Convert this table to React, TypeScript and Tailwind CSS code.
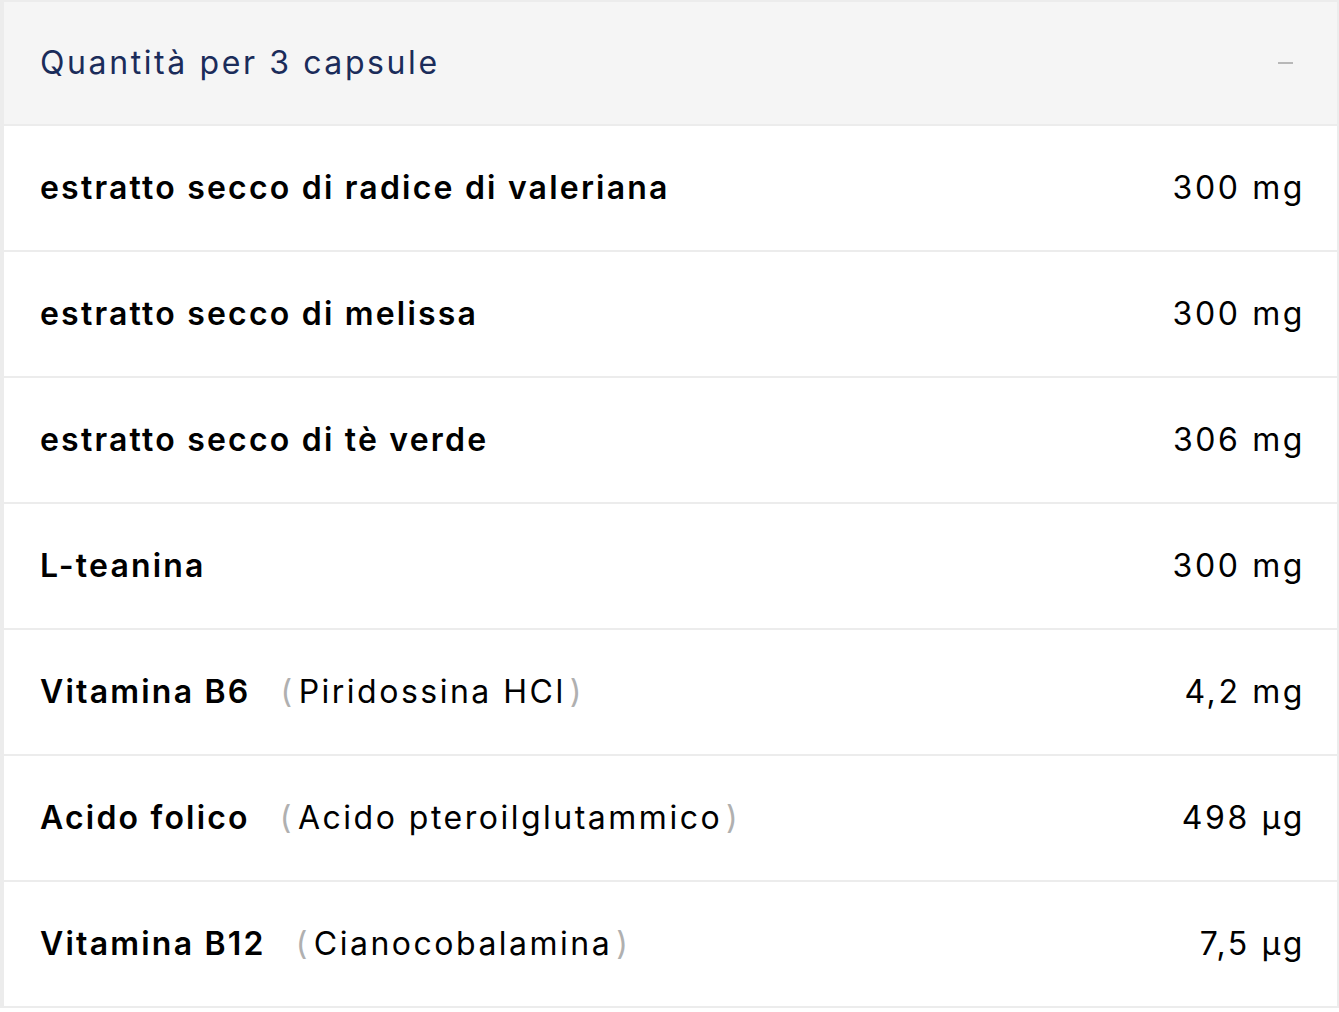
import React from 'react';

type Item = { name: string; note?: string; amount: string };

const items: Item[] = [
  { name: 'estratto secco di radice di valeriana', amount: '300 mg' },
  { name: 'estratto secco di melissa', amount: '300 mg' },
  { name: 'estratto secco di tè verde', amount: '306 mg' },
  { name: 'L-teanina', amount: '300 mg' },
  { name: 'Vitamina B6', note: 'Piridossina HCl', amount: '4,2 mg' },
  { name: 'Acido folico', note: 'Acido pteroilglutammico', amount: '498 µg' },
  { name: 'Vitamina B12', note: 'Cianocobalamina', amount: '7,5 µg' },
];

export default function App() {
  return (
    <div className="w-[1339px] h-[1012px] bg-white font-['Inter',sans-serif] overflow-hidden">
      <div className="border-l-4 border-r-2 border-t-2 border-[#ececec]">
        <div className="h-[124px] bg-[#f5f5f5] flex items-center justify-between pl-[36px] pr-[44px] border-b-2 border-[#ececec]">
          <span className="text-[32px] text-[#1b2c5a] tracking-[2.6px]">Quantità per 3 capsule</span>
          <span className="block w-[15px] h-[2px] bg-[#b8b8b8]"></span>
        </div>
        {items.map((it) => (
          <div key={it.name} className="h-[126px] flex items-center justify-between pl-[36px] pr-[32px] border-b-2 border-[#ececec]">
            <div className="flex items-center text-[32px] text-black">
              <span className="font-semibold tracking-[2.2px]">{it.name}</span>
              <span className={it.note ? 'ml-[30px] font-normal tracking-[2.5px]' : 'hidden'}>
                <span className="text-[#b0b0b0]">(</span>
                <span className="mx-[4px]">{it.note}</span>
                <span className="text-[#b0b0b0]">)</span>
              </span>
            </div>
            <span className="text-[32px] text-black tracking-[2.6px]">{it.amount}</span>
          </div>
        ))}
      </div>
    </div>
  );
}
